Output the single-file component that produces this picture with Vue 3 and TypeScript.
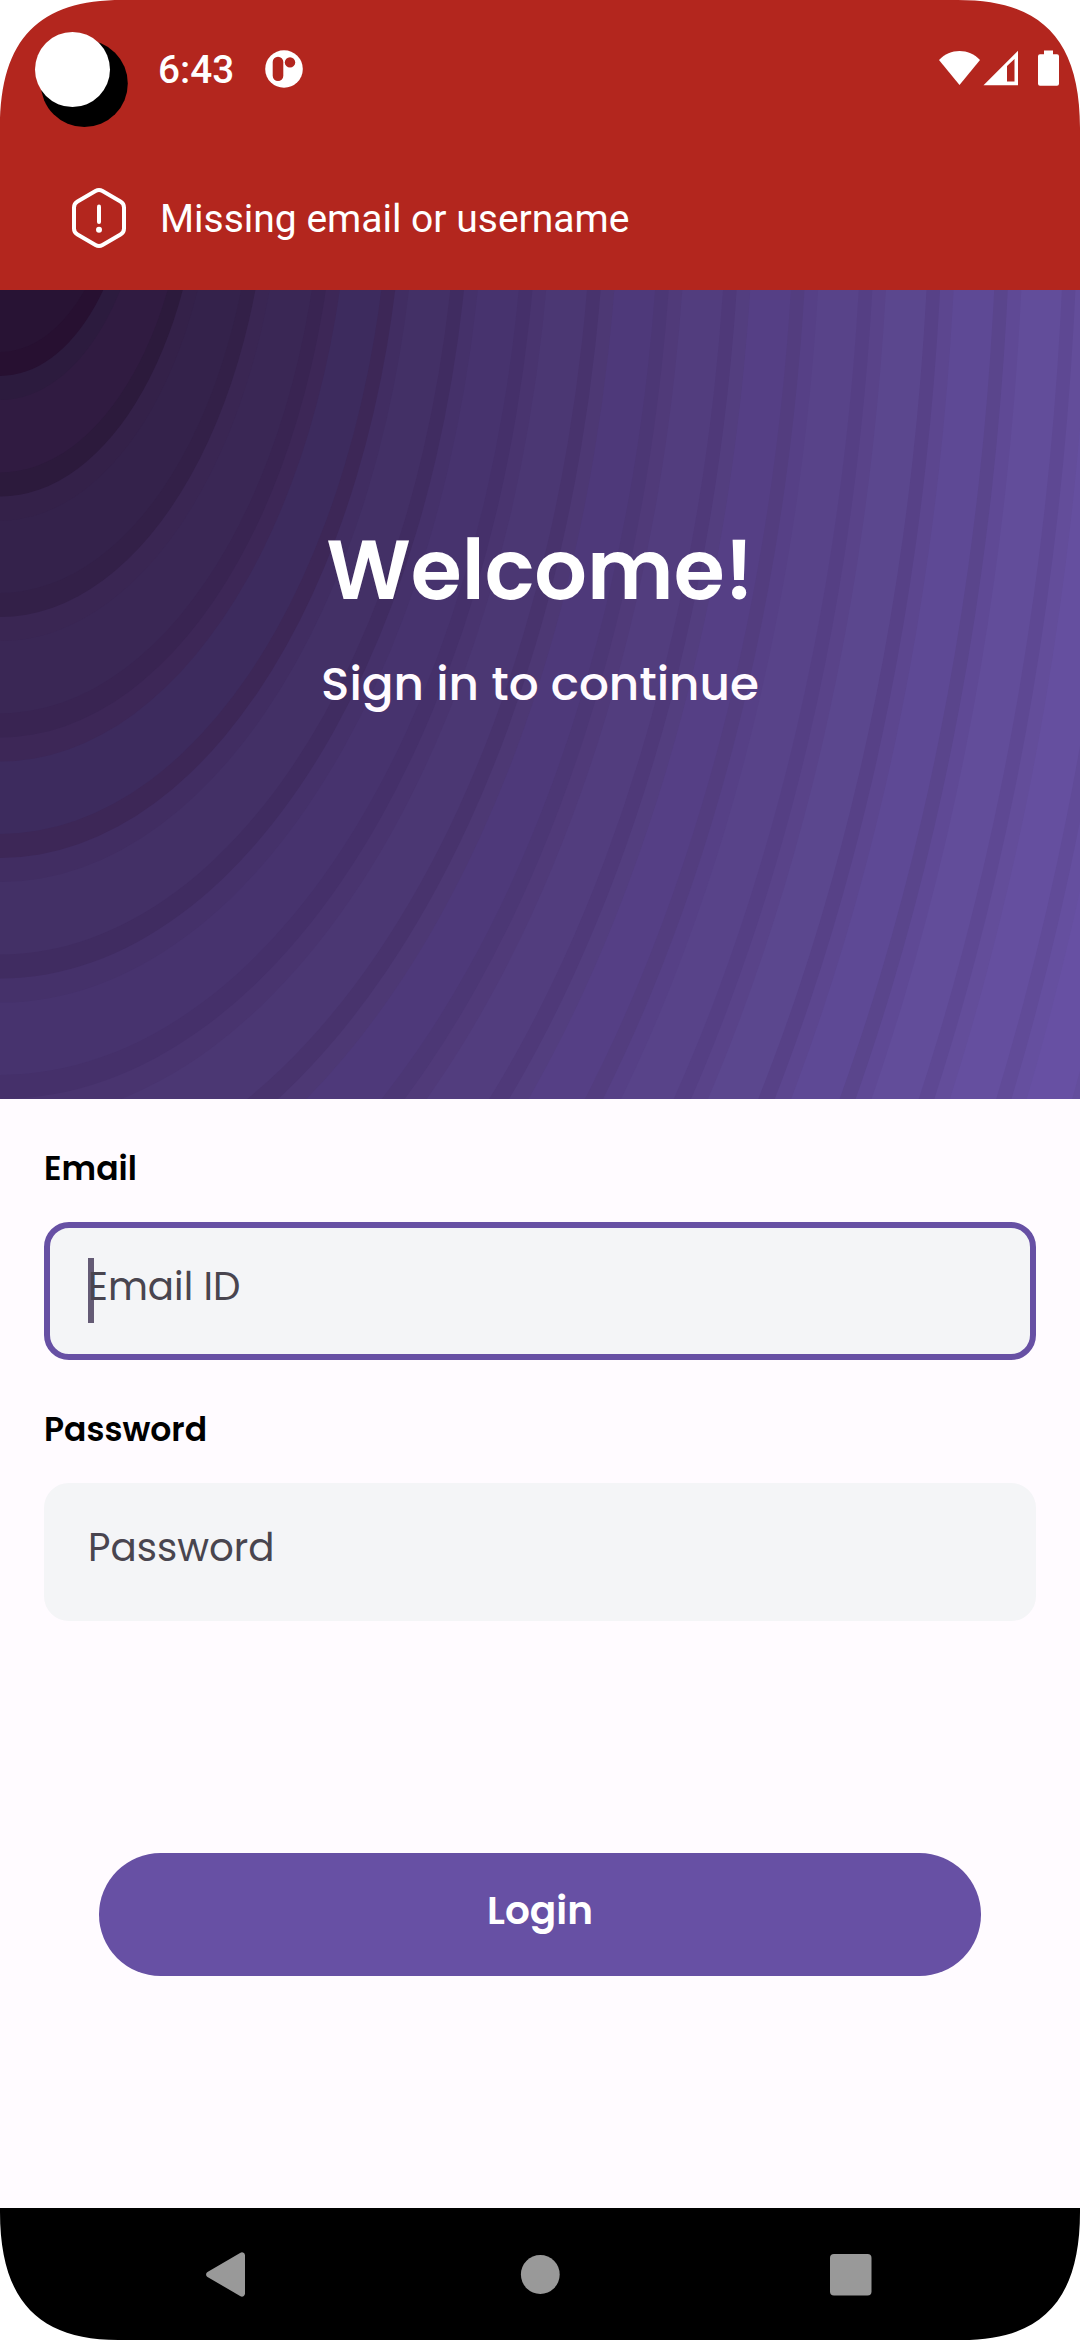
<script setup lang="ts">
import { ref } from 'vue'

interface Ellipse {
  rx: number
  ry: number
  fill: string
}

const email = ref('')
const password = ref('')

// Colours of every ring, from the centre outwards: inner edge, body, outer edge
const rings: [string, string, string][] = [
  ['#281234', '#281234', '#281234'],
  ['#281434', '#281334', '#271031'],
  ['#2c1b3e', '#301b41', '#2c1a3c'],
  ['#342149', '#34224b', '#332048'],
  ['#3a2653', '#3a2755', '#392452'],
  ['#3d2757', '#3d2b5e', '#3d2757'],
  ['#412d62', '#433066', '#402c61'],
  ['#45316a', '#47336e', '#45306a'],
  ['#49346f', '#4b3773', '#48336d'],
  ['#4d3874', '#4e397a', '#4c3775'],
  ['#503a79', '#523d7e', '#4f3979'],
  ['#533e7f', '#553f85', '#533d7f'],
  ['#564086', '#584389', '#553f84'],
  ['#594389', '#5b478e', '#574187'],
  ['#5c468f', '#5e4995', '#5a458c'],
  ['#5f4995', '#624d9a', '#5e4893'],
  ['#634d9a', '#654f9f', '#614b98'],
  ['#654f9f', '#6750a3', '#644e9d'],
]

const stepX = 67.43
const stepY = 120.5
const ellipses: Ellipse[] = rings
  .flatMap((colors, i) =>
    [0.2, 0.8, 1].map((part, j) => ({
      rx: (i + part) * stepX,
      ry: (i + part) * stepY,
      fill: colors[j],
    })),
  )
  .reverse()
</script>

<template>
  <div class="screen">
    <header class="alert">
      <div class="status">
        <span class="clock">6:43</span>
        <svg class="app-icon" width="38" height="38" viewBox="0 0 38 38">
          <circle cx="19" cy="19" r="18.8" fill="#fff" />
          <rect x="7.7" y="6.7" width="10.6" height="24.4" rx="5.3" fill="#b3261e" />
          <circle cx="25" cy="12.4" r="5.2" fill="#b3261e" />
        </svg>
        <svg class="signals" width="122" height="38" viewBox="0 0 122 38">
          <path d="M0 10C11-2 30-2 41 10L20.500 35z" fill="#fff" />
          <path d="M44.500 35.300L79 .8v34.500zM68 16v15.500h7.500V9z" fill="#fff" fill-rule="evenodd" />
          <path d="M105 .5h9v3.700h4a2 2 0 0 1 2 2v27.600a2 2 0 0 1-2 2h-17a2 2 0 0 1-2-2V6.200a2 2 0 0 1 2-2h4z" fill="#fff" />
        </svg>
      </div>
      <div class="message">
        <svg width="58" height="64" viewBox="0 0 58 64" fill="none" stroke="#fff" stroke-width="4" stroke-linecap="round">
          <path d="M25.500 5.100a7 7 0 0 1 7 0L50.500 15.400a7 7 0 0 1 3.500 6.100V42.500a7 7 0 0 1-3.500 6.100L32.500 58.900a7 7 0 0 1-7 0L7.500 48.600A7 7 0 0 1 4 42.500V21.500a7 7 0 0 1 3.500-6.100z" />
          <path d="M29 20.500V36" />
          <circle cx="29" cy="43.700" r="3" fill="#fff" stroke="none" />
        </svg>
        <span>Missing email or username</span>
      </div>
    </header>

    <section class="hero">
      <svg class="rings" width="1080" height="809" viewBox="0 155 1080 809">
        <rect y="155" width="1080" height="809" fill="#6750a4" />
        <ellipse v-for="(e, i) in ellipses" :key="i" :rx="e.rx" :ry="e.ry" :fill="e.fill" />
      </svg>
      <h1>Welcome!</h1>
      <p>Sign in to continue</p>
    </section>

    <form class="form" @submit.prevent>
      <label class="label" for="email">Email</label>
      <div class="field focused">
        <i class="caret"></i>
        <input id="email" v-model="email" type="text" placeholder="Email ID" />
      </div>
      <label class="label" for="password">Password</label>
      <div class="field">
        <input id="password" v-model="password" type="password" placeholder="Password" />
      </div>
      <button type="submit">Login</button>
    </form>

    <nav class="nav">
      <svg width="1080" height="132" viewBox="0 0 1080 132" fill="#999">
        <path d="M207.500 64L240.500 44.800a3 3 0 0 1 4.500 2.600V85.600a3 3 0 0 1-4.500 2.600L207.500 69a2.900 2.900 0 0 1 0-5z" />
        <circle cx="540.300" cy="66.500" r="19.400" />
        <rect x="830" y="46" width="41.500" height="41.500" rx="4" />
      </svg>
    </nav>

    <svg class="overlay" width="1080" height="2340" viewBox="0 0 1080 2340">
      <circle cx="84.300" cy="83.500" r="43.500" fill="#000" />
      <circle cx="72.500" cy="69.500" r="37.500" fill="#fff" />
      <g fill="#fff">
        <path d="M0 0H122C40 0 0 38 0 128z" />
        <path d="M1080 0H958C1040 0 1080 38 1080 128z" />
        <path d="M0 2340H118C40 2340 0 2302 0 2212z" />
        <path d="M1080 2340H962C1040 2340 1080 2302 1080 2212z" />
      </g>
    </svg>
  </div>
</template>

<style>
body {
  margin: 0;
}
</style>

<style scoped>
.screen {
  position: relative;
  display: flex;
  flex-direction: column;
  width: 1080px;
  height: 2340px;
  overflow: hidden;
  background: #fffbff;
  font-family: Poppins, Inter, sans-serif;
}
.alert {
  height: 290px;
  background: #b3261e;
  color: #fff;
  font-family: Roboto, sans-serif;
}
.status {
  display: flex;
  align-items: center;
  height: 137px;
  padding: 0 19px 0 158px;
}
.clock {
  width: 106.500px;
  font-size: 38.7px;
  font-weight: 500;
  line-height: 46px;
  padding-top: 2px;
}
.signals {
  margin-left: auto;
}
.message {
  display: flex;
  align-items: center;
  gap: 31px;
  height: 162px;
  padding-left: 70px;
  font-size: 39px;
}
.message span {
  padding: 2px 0 0 1px;
}
.hero {
  position: relative;
  display: flex;
  flex-direction: column;
  align-items: center;
  height: 809px;
  color: #fff;
}
.rings {
  position: absolute;
  inset: 0;
}
h1,
p {
  position: relative;
  margin: 0;
  white-space: nowrap;
}
h1 {
  margin-top: 230px;
  font-size: 82.6px;
  font-weight: 600;
  line-height: 100px;
}
p {
  margin-top: 34px;
  font-size: 46.9px;
  font-weight: 500;
  line-height: 60px;
  color: #fffbff;
}
.form {
  display: flex;
  flex: 1;
  flex-direction: column;
  padding: 0 44px;
}
.label {
  margin-top: 50px;
  align-self: flex-start;
  font-size: 33px;
  font-weight: 600;
  line-height: 40px;
  color: #000;
}
.field {
  position: relative;
  box-sizing: border-box;
  height: 138px;
  margin-top: 33px;
  border: 6px solid #f4f5f7;
  border-radius: 25px;
  background: #f4f5f7;
}
.focused {
  border-color: #6750a4;
}
.caret {
  position: absolute;
  left: 38px;
  top: 30px;
  width: 6px;
  height: 65px;
  background: #645b75;
}
input {
  position: relative;
  box-sizing: border-box;
  width: 100%;
  height: 117px;
  padding: 0 38px;
  border: 0;
  outline: 0;
  background: transparent;
  font: 400 38.8px Poppins, Inter, sans-serif;
}
input::placeholder {
  color: #49454f;
  opacity: 1;
}
button {
  height: 123px;
  margin: 232px 55px 0;
  padding: 0 0 8px;
  border: 0;
  border-radius: 62px;
  background: #6750a4;
  color: #fff;
  font: 600 39px Poppins, Inter, sans-serif;
}
.nav {
  height: 132px;
  background: #000;
}
.nav svg {
  display: block;
}
.overlay {
  position: absolute;
  inset: 0;
  pointer-events: none;
}
</style>
